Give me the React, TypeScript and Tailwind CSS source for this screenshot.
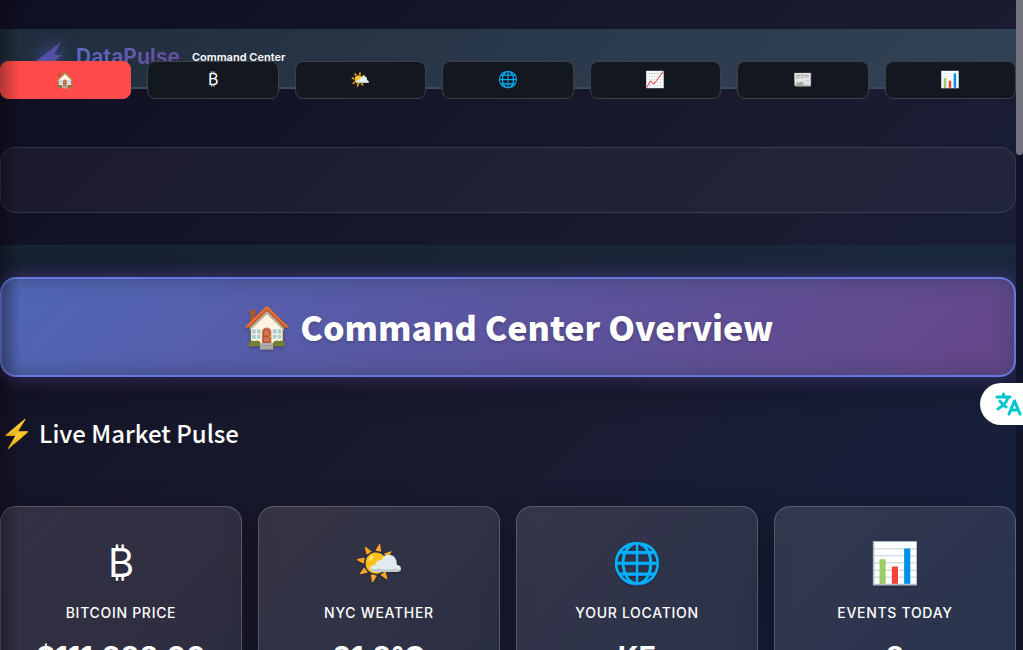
const tabs = [
  { icon: '🏠', label: 'Overview' },
  { icon: '₿', label: 'Bitcoin' },
  { icon: '🌤️', label: 'Weather' },
  { icon: '🌐', label: 'Location' },
  { icon: '📈', label: 'Markets' },
  { icon: '📰', label: 'News' },
  { icon: '📊', label: 'Analytics' },
];

const cards = [
  { icon: '₿', label: 'Bitcoin Price', value: '$111,888.00' },
  { icon: '🌤️', label: 'NYC Weather', value: '21.8°C' },
  { icon: '🌐', label: 'Your Location', value: 'KE' },
  { icon: '📊', label: 'Events Today', value: '8' },
];

function Header() {
  return (
    <header className="flex h-[60px] items-start border-b-2 border-[#3d4b60] bg-linear-135 from-[#1f2c3b] via-[#2a384b] to-[#324255] px-8 pt-3">
      <div className="flex items-center gap-3">
        <svg viewBox="0 0 28 32" aria-hidden="true" className="h-8 w-8 drop-shadow-[0_0_10px_#5568d0]">
          <path d="M27 1 L2 20 L13 21 L6 31 L28 14 L20 14 Z" fill="#5650a4" />
        </svg>
        <span className="bg-linear-135 from-[#566bc5] to-[#694794] bg-clip-text text-[21px] leading-8 font-bold text-transparent">DataPulse</span>
        <span className="text-[11px] leading-8 font-semibold text-white">Command Center</span>
      </div>
    </header>
  );
}

function Tabs() {
  return (
    <nav className="relative -mt-7 grid grid-cols-7 gap-4">
      {tabs.map((tab, i) => (
        <button
          key={tab.label}
          type="button"
          aria-label={tab.label}
          className={
            i === 0
              ? 'h-[38px] rounded-lg border border-[#ff4b4b] bg-[#ff4b4b] pb-0.5 text-base text-white'
              : 'h-[38px] rounded-lg border border-[#3e4047] bg-[#13171f] pb-0.5 text-base text-white'
          }
        >
          {tab.icon}
        </button>
      ))}
    </nav>
  );
}

export default function App() {
  return (
    <div className="relative flex h-screen overflow-hidden bg-linear-135 from-[#0f0f22] via-[#1a1a2e] to-[#16213e] font-[Inter,'Noto_Color_Emoji',sans-serif] text-white">
      <main className="min-w-0 flex-1 pt-[29px]">
        <Header />
        <Tabs />
        <div className="mt-12 h-[66px] rounded-2xl border border-white/10 bg-white/4" />
        <section className="mt-8 bg-linear-to-b from-[#1c3a48]/40 to-transparent pt-8">
          <h1 className="rounded-2xl border-2 border-[#6776dd] bg-linear-135 from-[#4f67b8] via-[#5b559f] to-[#654587] py-5 text-center font-['Noto_Sans_CJK_JP','Noto_Color_Emoji',sans-serif] text-[34px] leading-14 font-black shadow-[0_0_20px_#6a55b888,0_8px_32px_#00000055,inset_0_0_20px_#30405c99] text-shadow-md">
            <span className="text-[40px] leading-10">🏠</span> Command Center Overview
          </h1>
        </section>
        <h2 className="mt-10 font-['Noto_Sans_CJK_JP','Noto_Color_Emoji',sans-serif] text-2xl leading-[30px] font-medium">
          <span className="text-[27px] leading-[30px]">⚡</span> Live Market Pulse
        </h2>
        <div className="mt-[58px] grid grid-cols-4 gap-4">
          {cards.map((card) => (
            <article key={card.label} className="rounded-2xl border border-white/20 bg-linear-135 from-white/12 to-white/8 px-6 py-8 text-center shadow-[0_8px_32px_#00000055]">
              <div className="text-[40px] leading-12 text-shadow-sm">{card.icon}</div>
              <div className="mt-4 text-sm leading-5 font-medium tracking-wider uppercase">{card.label}</div>
              <div className="mt-4 text-[29px] leading-9 font-bold">{card.value}</div>
            </article>
          ))}
        </div>
      </main>
      <div aria-hidden="true" className="w-[7px] bg-[#12142a]">
        <div className="h-[155px] rounded-b bg-[#73737f]" />
      </div>
      <div aria-hidden="true" className="pointer-events-none absolute inset-y-0 left-0 w-5 bg-linear-to-r from-black/30 to-transparent" />
      <button type="button" aria-label="Translate" className="absolute top-[383px] right-0 flex h-[42px] w-[43px] items-center justify-end rounded-l-full bg-white">
        <svg viewBox="0 0 28 26" className="h-[26px] w-7" fill="none" stroke="#00c4cc" strokeWidth="3" strokeLinecap="round" strokeLinejoin="round" aria-hidden="true">
          <path d="M2 6H15M8.500 3V6M13 6C12 11 8 15 3 18M5 10C7 13 9 15 11 16M14 23L19.500 10L25 23M16 19H23" />
        </svg>
      </button>
    </div>
  );
}
